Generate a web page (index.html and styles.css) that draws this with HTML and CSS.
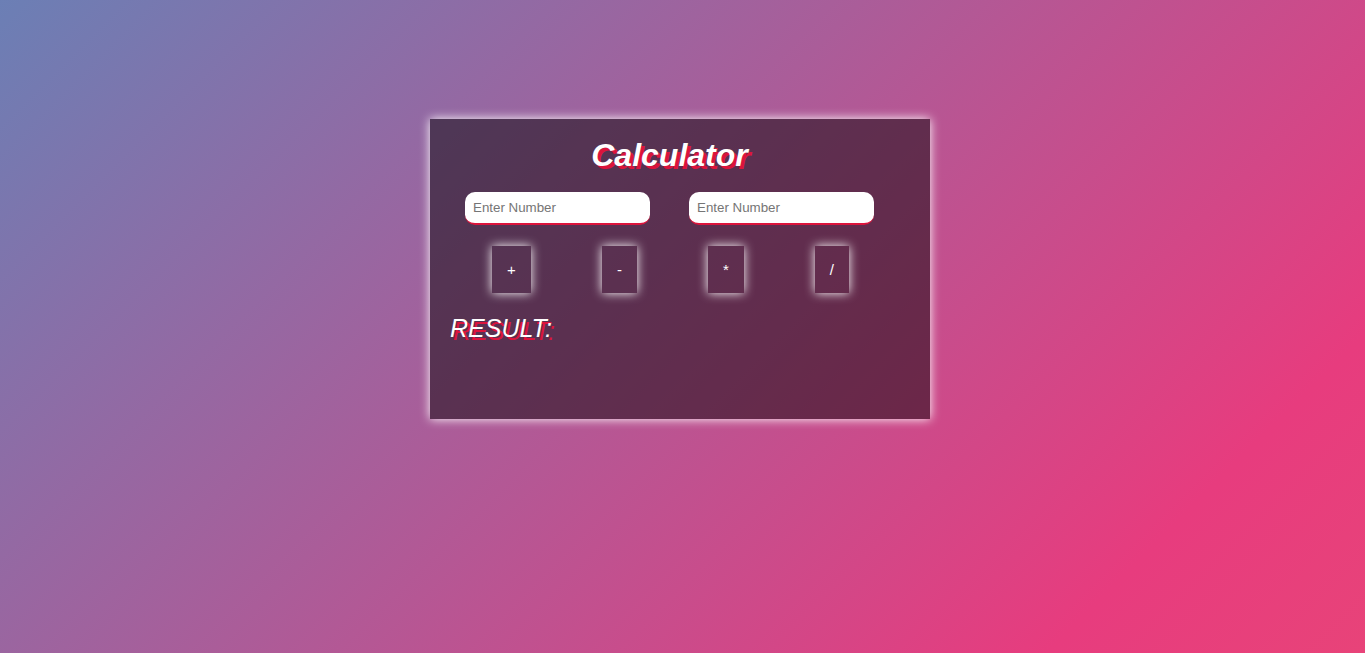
FILE: index.html
```html
<!DOCTYPE html>
<html lang="en">
<head>
<meta charset="utf-8">
<title>Calculator</title>
<link rel="stylesheet" href="styles.css">
</head>
<body>
<main class="calculator">
  <h1 class="title">Calculator</h1>
  <div class="fields">
    <input class="field" type="text" placeholder="Enter Number" aria-label="First number">
    <input class="field" type="text" placeholder="Enter Number" aria-label="Second number">
  </div>
  <div class="operators">
    <button class="operator" type="button">+</button>
    <button class="operator" type="button">-</button>
    <button class="operator" type="button">*</button>
    <button class="operator" type="button">/</button>
  </div>
  <p class="result">RESULT:</p>
</main>
</body>
</html>
```
FILE: styles.css
```css
* {
  box-sizing: border-box;
}

body {
  margin: 0;
  min-height: 100vh;
  padding: 119px 5px 20px 0;
  font-family: "Liberation Sans", Arial, sans-serif;
  color: white;
  background: linear-gradient(-45deg, #ee7752, #e73c7e, #23a6d5, #23d5ab);
  background-size: 400% 400%;
  background-position: 66% 50%;
}

.calculator {
  max-width: 500px;
  min-height: 300px;
  margin: 0 auto;
  padding: 18px 41px 20px 20px;
  background: rgba(0, 0, 0, 0.47);
  box-shadow: 0 0 10px white;
}

.title {
  margin: 0 0 18px;
  font-size: 32px;
  line-height: 37px;
  font-style: italic;
  text-align: center;
  text-shadow: 3px 3px crimson;
}

.fields {
  display: flex;
  justify-content: center;
  gap: 39px;
}

.field {
  width: 185px;
  height: 33px;
  padding: 0 8px;
  border: 0;
  border-bottom: 2px solid crimson;
  border-radius: 10px;
  background: white;
  font-family: inherit;
}

.operators {
  display: flex;
  justify-content: center;
  gap: 71px;
  margin-top: 21px;
  padding-left: 2px;
}

.operator {
  padding: 15px;
  border: 0;
  background: transparent;
  box-shadow: 0 0 10px white;
  color: white;
  font-family: inherit;
  font-size: 15px;
  line-height: 17px;
}

.result {
  margin: 21px 0 0;
  font-size: 25px;
  line-height: 29px;
  font-style: italic;
  text-shadow: 3px 3px crimson;
}
```
